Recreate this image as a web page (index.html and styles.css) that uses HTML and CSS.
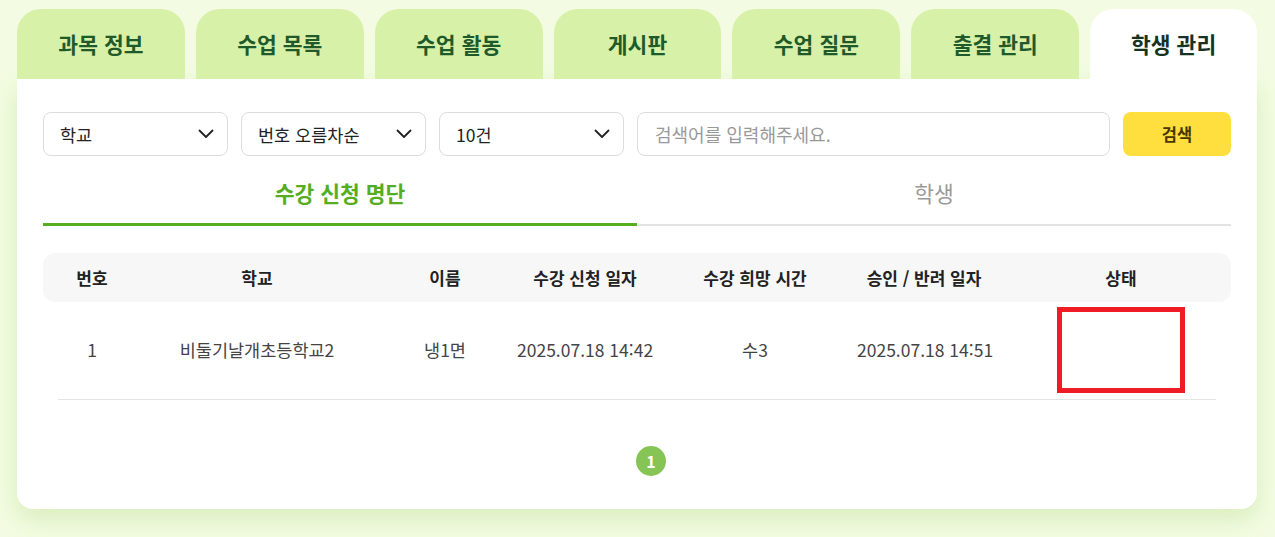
FILE: index.html
```html
<!DOCTYPE html>
<html lang="ko">
<head>
<meta charset="utf-8">
<title>학생 관리</title>
<link rel="stylesheet" href="styles.css">
</head>
<body>
<div class="wrap">
  <nav class="tabs">
    <div class="tab">과목 정보</div>
    <div class="tab">수업 목록</div>
    <div class="tab">수업 활동</div>
    <div class="tab">게시판</div>
    <div class="tab">수업 질문</div>
    <div class="tab">출결 관리</div>
    <div class="tab active">학생 관리</div>
  </nav>
  <section class="card">
    <div class="filters">
      <div class="select"><span>학교</span><svg class="chev" width="16" height="10" viewBox="0 0 16 10"><path d="M1.5 1.5 L8 8 L14.5 1.5" fill="none" stroke="#222" stroke-width="1.8" stroke-linecap="round" stroke-linejoin="round"/></svg></div>
      <div class="select"><span>번호 오름차순</span><svg class="chev" width="16" height="10" viewBox="0 0 16 10"><path d="M1.5 1.5 L8 8 L14.5 1.5" fill="none" stroke="#222" stroke-width="1.8" stroke-linecap="round" stroke-linejoin="round"/></svg></div>
      <div class="select"><span>10건</span><svg class="chev" width="16" height="10" viewBox="0 0 16 10"><path d="M1.5 1.5 L8 8 L14.5 1.5" fill="none" stroke="#222" stroke-width="1.8" stroke-linecap="round" stroke-linejoin="round"/></svg></div>
      <div class="search">검색어를 입력해주세요.</div>
      <button class="btn">검색</button>
    </div>
    <div class="subtabs">
      <div class="subtab on">수강 신청 명단</div>
      <div class="subtab">학생</div>
    </div>
    <div class="thead">
      <div>번호</div><div>학교</div><div>이름</div><div>수강 신청 일자</div><div>수강 희망 시간</div><div>승인 / 반려 일자</div><div class="last">상태</div>
    </div>
    <div class="trow">
      <div>1</div><div>비둘기날개초등학교2</div><div>냉1면</div><div>2025.07.18 14:42</div><div>수3</div><div>2025.07.18 14:51</div><div class="last"><span class="mark"></span></div>
    </div>
    <div class="pager"><span class="page">1</span></div>
  </section>
</div>
</body>
</html>
```

FILE: styles.css
```css
* { box-sizing: border-box; }
html, body { margin: 0; padding: 0; }
body {
  background: #f3fce2;
  font-family: "Noto Sans CJK KR", "Noto Sans", sans-serif;
  width: 1275px;
  height: 537px;
  overflow: hidden;
}
.wrap {
  padding: 9px 18px 0 17px;
}
.tabs {
  display: flex;
  gap: 11px;
}
.tab {
  width: 168px;
  height: 70px;
  border-radius: 24px 24px 0 0;
  background: #d7f1a9;
  color: #1f5a2b;
  font-size: 21.5px;
  font-weight: 700;
  display: flex;
  align-items: center;
  justify-content: center;
  padding-bottom: 2px;
}
.tab.active {
  background: #fff;
  color: #17321f;
  width: 167px;
}
.card {
  background: #fff;
  border-radius: 0 0 16px 16px;
  padding: 33px 26px 33px 26px;
  box-shadow: 0 10px 24px rgba(170, 210, 120, 0.35);
}
.filters {
  display: flex;
  gap: 13px;
  height: 44px;
}
.select {
  width: 185px;
  border: 1px solid #dcdcdc;
  border-radius: 8px;
  display: flex;
  align-items: center;
  justify-content: space-between;
  padding: 0 13px 0 16px;
  font-size: 17.5px;
  color: #222;
  white-space: nowrap;
}
.search {
  flex: 1;
  border: 1px solid #dcdcdc;
  border-radius: 8px;
  display: flex;
  align-items: center;
  padding: 0 17px;
  font-size: 18px;
  color: #999;
}
.btn {
  width: 108px;
  border: none;
  border-radius: 8px;
  background: #ffdf3d;
  color: #4a3400;
  font-family: inherit;
  font-size: 16.5px;
  font-weight: 700;
}
.subtabs {
  display: flex;
  margin-top: 14px;
}
.subtab {
  flex: 1;
  text-align: center;
  font-size: 21.5px;
  line-height: 30px;
  padding: 8px 0 16px;
  color: #999;
  border-bottom: 2px solid #e3e3e3;
}
.subtab.on {
  color: #55ad1f;
  font-weight: 700;
  padding-bottom: 15px;
  border-bottom: 3px solid #55ad1f;
}
.thead, .trow {
  display: grid;
  grid-template-columns: 98px 232px 144px 136px 204px 134px 1fr;
  text-align: center;
  align-items: center;
  white-space: nowrap;
}
.thead {
  margin-top: 27px;
  height: 49px;
  background: #f7f7f7;
  border-radius: 12px;
  font-size: 17px;
  font-weight: 700;
  color: #222;
}
.last { padding-left: 20px; }
.trow {
  height: 98px;
  font-size: 17.5px;
  color: #444;
  padding-bottom: 3px;
  background: linear-gradient(#e5e5e5, #e5e5e5) no-repeat center bottom / calc(100% - 30px) 1px;
}
.trow .last {
  display: flex;
  justify-content: center;
}
.mark {
  display: block;
  width: 128px;
  height: 86px;
  border: 5px solid #ee1c25;
}
.pager {
  display: flex;
  justify-content: center;
  margin-top: 46px;
  padding-left: 28px;
}
.page {
  width: 30px;
  height: 30px;
  border-radius: 50%;
  background: #86c456;
  color: #fff;
  font-size: 16px;
  font-weight: 700;
  display: flex;
  align-items: center;
  justify-content: center;
}
```
